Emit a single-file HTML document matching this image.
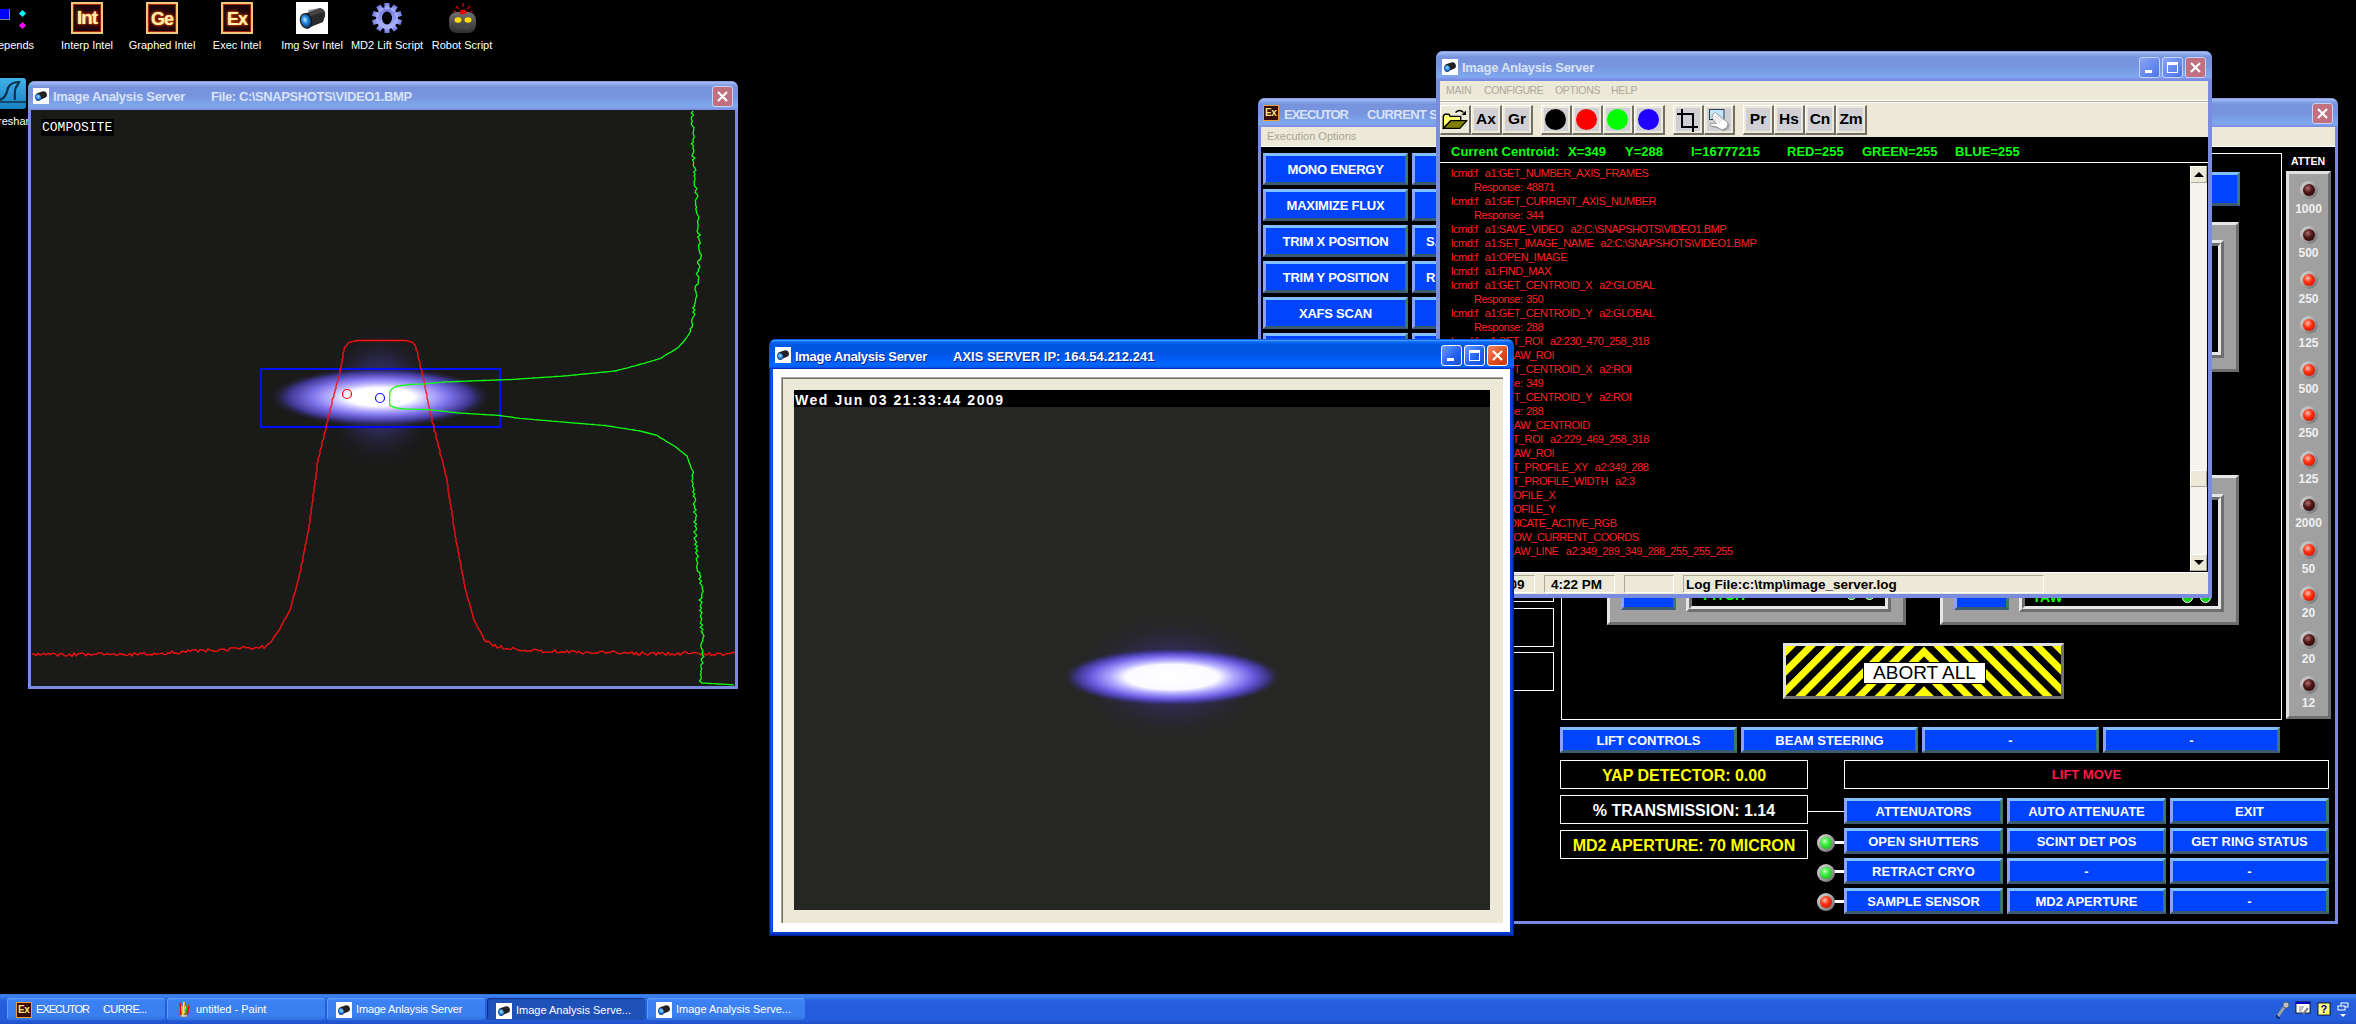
<!DOCTYPE html>
<html><head><meta charset="utf-8">
<style>
*{margin:0;padding:0;box-sizing:border-box}
html,body{width:2356px;height:1024px;overflow:hidden;background:#000;font-family:"Liberation Sans",sans-serif;position:relative}
.a{position:absolute}
.ico-lbl{position:absolute;top:39px;color:#fff;font-size:11px;white-space:nowrap;text-align:center;width:80px;line-height:13px}
/* XP inactive window */
.win{position:absolute}
.frame-in{background:#7A8CE0}
.tb-in{position:absolute;left:0;right:0;top:0;height:29px;border-radius:7px 7px 0 0;
 background:linear-gradient(to bottom,#7A90E0 0px,#A2BAF2 1.5px,#8AA8EA 3.5px,#7893DE 6px,#7794DE 15px,#7CA2E8 22px,#80A8EE 26px,#7F90E6 28px,#7A8CE0 29px)}
.tb-act{position:absolute;left:0;right:0;top:0;height:30px;border-radius:7px 7px 0 0;
 background:linear-gradient(to bottom,#0048D8 0px,#3D95FF 1.5px,#0A68F8 3px,#0056E0 6px,#0055E2 14px,#005CF5 20px,#0066FF 25px,#0060F8 28px,#0030C0 29.5px,#0030C0 30px)}
.ttl{position:absolute;font-weight:bold;font-size:13px;white-space:pre;line-height:16px}
.ttl-in{color:#D8E2F8}
.ttl-act{color:#fff;text-shadow:1px 1px 0 #0A1E8C}
.cam{position:absolute;width:16px;height:16px;background:#fff}
.cam:before{content:"";position:absolute;left:3px;top:4px;width:11px;height:7px;background:#222;border-radius:3px 5px 5px 3px;transform:rotate(-20deg)}
.cam:after{content:"";position:absolute;left:2px;top:6px;width:6px;height:7px;background:radial-gradient(circle at 60% 40%,#9fe0ff,#1a70d0 50%,#082050 90%);border-radius:50%;transform:rotate(-20deg)}
.xbtn-in{position:absolute;width:21px;height:21px;border-radius:3px;border:1px solid #C7D3F5;background:#C0707E}
.bbtn-in{position:absolute;width:21px;height:21px;border-radius:3px;border:1px solid #C7D3F5;background:linear-gradient(135deg,#8AA4F4,#4A74E8)}
.xbtn-act{position:absolute;width:21px;height:21px;border-radius:3px;border:1px solid #fff;background:linear-gradient(135deg,#F08868,#E04818 60%,#C83808)}
.bbtn-act{position:absolute;width:21px;height:21px;border-radius:3px;border:1px solid #fff;background:linear-gradient(135deg,#6A9CFF,#2060F0 60%,#1850D8)}
/* executor blue button */
.eb{position:absolute;background:#0044FF;border-style:solid;border-width:3px;border-color:#80C0FF #3C7870 #3C5A70 #8CA0FF;color:#fff;font-weight:bold;font-size:13px;text-align:center;white-space:nowrap;overflow:hidden}
.wbox{position:absolute;border:1px solid #fff}
.led{position:absolute;width:18px;height:18px;border-radius:50%;background:linear-gradient(135deg,#e0e0e0 0,#a8a8a8 45%,#6a6a6a 100%)}
.led:after{content:"";position:absolute;left:3px;top:3px;width:12px;height:12px;border-radius:50%}
.lg:after{background:radial-gradient(circle at 40% 35%,#c0ffc0 0,#40f040 35%,#10a010 100%)}
.lr:after{background:radial-gradient(circle at 40% 35%,#ffc0b0 0,#ff3010 40%,#c00800 100%)}
.ld:after{background:radial-gradient(circle at 40% 35%,#b07070 0,#501818 40%,#200000 100%)}
.tbb{position:absolute;top:998px;width:158px;height:22px;border-radius:3px;background:linear-gradient(to bottom,#4A90F8 0,#3C81F3 3px,#3A7EF0 18px,#3270E0 22px);box-shadow:inset 1px 1px 0 #5EA0FF}
.tbb span{position:absolute;top:4px;color:#fff;font:11px/14px 'Liberation Sans';white-space:pre}
.tbb-act{background:#1E52B7;box-shadow:inset 1px 1px 1px #0A3090}
.lg-l{color:#ff2020;font:11px/14px "Liberation Sans";white-space:pre;letter-spacing:-0.45px;word-spacing:1px}
.atl{position:absolute;width:45px;text-align:center;color:#f0f0f0;font:bold 12px/14px 'Liberation Sans'}
</style></head>
<body>

<!-- ===== DESKTOP ICONS ===== -->
<div id="desk">
 <div class="a" style="left:0;top:9px;width:10px;height:11px;background:#0000ff;border-right:1px solid #808080;border-bottom:1px solid #808080"></div>
 <div class="a" style="left:20px;top:11px;width:5px;height:5px;background:#00ffff;transform:rotate(45deg)"></div>
 <div class="a" style="left:20px;top:23px;width:5px;height:5px;background:#ff00ff;transform:rotate(45deg)"></div>
 <div class="ico-lbl" style="left:-28px">Depends</div>
 <div class="a" style="left:71px;top:2px;width:32px;height:32px;background:#1c060a;border:2px solid #f0c878;box-shadow:inset 0 0 0 1px #a02808"><div class="a" style="left:-2px;top:3px;width:32px;text-align:center;font:bold 19px/22px 'Liberation Sans';color:#fff0b0;text-shadow:0 0 1px #ff9020,0 0 3px #ff5000,0 0 5px #b02000;letter-spacing:-1px">Int</div></div>
 <div class="ico-lbl" style="left:47px">Interp Intel</div>
 <div class="a" style="left:146px;top:2px;width:32px;height:32px;background:#1c060a;border:2px solid #f0c878;box-shadow:inset 0 0 0 1px #a02808"><div class="a" style="left:-2px;top:4px;width:32px;text-align:center;font:bold 18px/22px 'Liberation Sans';color:#fff0b0;text-shadow:0 0 1px #ff9020,0 0 3px #ff5000,0 0 5px #b02000;letter-spacing:-1px">Ge</div></div>
 <div class="ico-lbl" style="left:122px">Graphed Intel</div>
 <div class="a" style="left:221px;top:2px;width:32px;height:32px;background:#1c060a;border:2px solid #f0c878;box-shadow:inset 0 0 0 1px #a02808"><div class="a" style="left:-2px;top:4px;width:32px;text-align:center;font:bold 18px/22px 'Liberation Sans';color:#fff0b0;text-shadow:0 0 1px #ff9020,0 0 3px #ff5000,0 0 5px #b02000;letter-spacing:-1px">Ex</div></div>
 <div class="ico-lbl" style="left:197px">Exec Intel</div>
 <div class="a" style="left:296px;top:2px;width:32px;height:32px;background:#fff">
  <svg class="a" style="left:0;top:0" width="32" height="32"><defs><radialGradient id="lens" cx="0.45" cy="0.4" r="0.6"><stop offset="0" stop-color="#c0f0ff"/><stop offset="0.4" stop-color="#2a90e8"/><stop offset="1" stop-color="#0a2050"/></radialGradient></defs>
  <path d="M8 12 L24 6 Q30 7 29 14 L27 20 L12 26 Z" fill="#2a2a2a"/><path d="M12 8 L24 6 Q28 7 28 10 L14 14z" fill="#555" opacity="0.6"/><ellipse cx="10" cy="19" rx="5.5" ry="7.5" transform="rotate(-20 10 19)" fill="url(#lens)" stroke="#111" stroke-width="1"/></svg></div>
 <div class="ico-lbl" style="left:272px">Img Svr Intel</div>
 <svg class="a" style="left:371px;top:2px" width="32" height="32"><defs><linearGradient id="gear" x1="0" y1="0" x2="0" y2="1"><stop offset="0" stop-color="#7078e0"/><stop offset="1" stop-color="#b0b8ff"/></linearGradient></defs>
  <g transform="translate(16 16)" fill="url(#gear)"><circle r="11"/>
  <rect x="-2.5" y="-15" width="5" height="6"/><rect x="-2.5" y="-15" width="5" height="6" transform="rotate(36)"/><rect x="-2.5" y="-15" width="5" height="6" transform="rotate(72)"/><rect x="-2.5" y="-15" width="5" height="6" transform="rotate(108)"/><rect x="-2.5" y="-15" width="5" height="6" transform="rotate(144)"/><rect x="-2.5" y="-15" width="5" height="6" transform="rotate(180)"/><rect x="-2.5" y="-15" width="5" height="6" transform="rotate(216)"/><rect x="-2.5" y="-15" width="5" height="6" transform="rotate(252)"/><rect x="-2.5" y="-15" width="5" height="6" transform="rotate(288)"/><rect x="-2.5" y="-15" width="5" height="6" transform="rotate(324)"/>
  <ellipse rx="5" ry="6.5" fill="#000"/></g></svg>
 <div class="ico-lbl" style="left:347px">MD2 Lift Script</div>
 <svg class="a" style="left:446px;top:1px" width="34" height="34"><defs><linearGradient id="rb" x1="0" y1="0" x2="0" y2="1"><stop offset="0" stop-color="#707070"/><stop offset="1" stop-color="#2e2e2e"/></linearGradient></defs>
  <rect x="3" y="11" width="27" height="21" rx="8" fill="url(#rb)"/><ellipse cx="12" cy="19" rx="3.5" ry="2.8" fill="#ffe000"/><ellipse cx="22" cy="19" rx="3.5" ry="2.8" fill="#ffe000"/>
  <path d="M10 25h14M11 27h12" stroke="#555" stroke-width="1"/><path d="M13 23v6M17 23v6M21 23v6" stroke="#444" stroke-width="1"/>
  <ellipse cx="17" cy="11" rx="3.5" ry="2.5" fill="#e00000"/><path d="M17 2v4M10 5l3 3M24 5l-3 3M7 10l3 1M27 10l-3 1" stroke="#e00000" stroke-width="1.2"/></svg>
 <div class="ico-lbl" style="left:422px">Robot Script</div>
 <div class="a" style="left:-6px;top:78px;width:32px;height:31px;border-radius:3px;background:linear-gradient(to bottom,#40b0e8,#1880c0)"><svg class="a" style="left:0;top:0" width="32" height="31"><path d="M6 22 Q12 20 14 10 Q17 4 25 4 L23 8 Q20 10 21 22" fill="none" stroke="#003050" stroke-width="2.2"/><path d="M0 24h32" stroke="#0a3050" stroke-width="1.5"/></svg></div>
 <div class="ico-lbl" style="left:-30px;top:115px">Wireshark</div>
</div>

<!-- ===== LEFT IAS WINDOW ===== -->
<div id="w1" class="win frame-in" style="left:28px;top:81px;width:710px;height:608px;border-radius:7px 7px 0 0">
 <div class="tb-in"></div>
 <div class="cam" style="left:5px;top:7px"></div>
 <div class="ttl ttl-in" style="left:25px;top:8px;letter-spacing:-0.3px">Image Analysis Server</div>
 <div class="ttl ttl-in" style="left:183px;top:8px;letter-spacing:-0.4px">File: C:\SNAPSHOTS\VIDEO1.BMP</div>
 <div class="xbtn-in" style="left:684px;top:5px"><svg width="19" height="19" class="a" style="left:0;top:0"><path d="M5 5L14 14M14 5L5 14" stroke="#fff" stroke-width="2.2"/></svg></div>
 <svg class="a" style="left:3px;top:29px" width="704" height="576" viewBox="31 110 704 576">
  <defs>
   <radialGradient id="g1" cx="380" cy="397" r="112" gradientUnits="userSpaceOnUse" gradientTransform="translate(380 397) scale(1 0.27) translate(-380 -397)">
    <stop offset="0" stop-color="#fff"/><stop offset="0.3" stop-color="#fff"/><stop offset="0.45" stop-color="#b8b0ff"/><stop offset="0.62" stop-color="#7a70e8"/><stop offset="0.82" stop-color="#3e3690"/><stop offset="1" stop-color="#1a1a19" stop-opacity="0"/>
   </radialGradient>
   <radialGradient id="g1b" cx="380" cy="397" r="70" gradientUnits="userSpaceOnUse" gradientTransform="translate(380 397) scale(0.85 1) translate(-380 -397)">
    <stop offset="0" stop-color="#40387a"/><stop offset="0.5" stop-color="#2c2850"/><stop offset="1" stop-color="#1a1a19" stop-opacity="0"/>
   </radialGradient>
  </defs>
  <rect x="31" y="110" width="704" height="576" fill="#1a1a19"/>
  <ellipse cx="380" cy="397" rx="60" ry="70" fill="url(#g1b)"/>
  <ellipse cx="380" cy="397" rx="112" ry="31" fill="url(#g1)"/>
  <rect x="261" y="369" width="239" height="58" fill="none" stroke="#0010ff" stroke-width="2"/>
  <circle cx="347" cy="394" r="4.5" fill="none" stroke="#ff0000" stroke-width="1.2"/>
  <circle cx="380" cy="398" r="4.5" fill="none" stroke="#1010ff" stroke-width="1.2"/>
  <polyline fill="none" stroke="#ff1010" stroke-width="1.3" points="32,654.4 34,653.7 36,655.5 38,653.4 40,655.1 42,654.4 44,653.3 46,654.9 48,653.2 50,654.6 52,653.3 54,653.3 56,654.5 58,656.0 60,653.4 62,653.7 64,655.2 66,656.3 68,655.0 70,654.3 72,656.4 74,653.0 76,655.9 78,653.9 80,653.3 82,653.2 84,653.9 86,655.7 88,653.4 90,654.8 92,655.0 94,654.0 96,654.6 98,652.9 100,652.8 102,653.3 104,655.0 106,654.1 108,653.7 110,654.6 112,654.2 114,653.6 116,655.3 118,655.0 120,653.3 122,654.5 124,654.3 126,655.6 128,655.0 130,653.4 132,655.9 134,652.8 136,653.8 138,655.0 140,652.8 142,654.0 144,652.4 146,654.6 148,655.0 150,654.3 152,655.2 154,653.1 156,654.3 158,653.8 160,653.7 162,653.1 164,654.4 166,654.6 168,652.8 170,653.4 172,651.1 174,653.3 176,652.9 178,654.1 180,653.3 182,651.3 184,651.5 186,652.4 188,649.9 190,651.4 192,650.2 194,649.9 196,649.6 198,652.0 200,649.6 202,649.9 204,650.3 206,651.9 208,648.9 210,650.1 212,650.4 214,651.5 216,651.1 218,651.1 220,648.9 222,649.3 224,648.9 226,650.7 228,650.9 230,647.8 232,647.8 234,647.9 236,647.8 238,648.5 240,648.8 242,647.5 244,646.4 246,647.8 248,647.5 250,648.1 252,649.4 254,648.3 256,647.5 258,647.8 260,647.9 262,645.5 264,648.4 266,646.0 268,644.3 271,642.1 273,638.9 274,636.9 276,634.5 277,633.2 279,630.5 280,628.5 281,626.5 282,624.4 283,622.5 284,620.0 286,617.8 287,615.9 288,613.7 289,611.9 290,609.4 291,608.4 291,606.1 292,603.6 292,601.7 293,599.8 293,597.8 294,595.5 294,594.4 295,592.6 296,590.0 296,588.0 297,585.5 297,583.5 298,581.8 298,579.7 299,578.4 299,575.6 300,573.3 300,572.4 301,569.9 301,567.4 301,565.8 302,563.2 302,561.7 303,560.2 303,558.0 303,555.8 304,553.2 304,551.3 305,549.0 305,547.7 305,545.4 306,543.7 306,541.1 307,538.9 307,537.6 307,535.7 308,533.5 308,531.4 309,529.4 309,527.3 309,524.6 310,523.0 310,520.7 310,518.3 310,516.3 311,514.6 311,512.5 311,511.0 311,509.3 312,506.6 312,505.2 312,503.2 313,501.2 313,498.4 313,496.2 313,494.2 314,492.1 314,490.1 314,488.6 314,486.9 315,484.8 315,482.3 315,480.5 316,478.6 316,475.7 316,474.4 316,472.7 317,470.5 317,468.4 317,466.1 317,463.7 318,462.4 318,459.8 318,458.3 319,456.5 320,453.7 320,451.7 320,450.3 321,448.0 322,445.3 322,443.2 322,441.1 323,440.0 324,437.8 324,435.0 324,433.7 325,431.9 326,429.4 326,427.0 326,425.2 327,422.7 328,420.5 328,419.6 328,417.1 329,414.9 330,413.3 330,410.6 330,409.0 331,406.9 332,404.1 332,402.0 332,400.0 333,397.9 334,396.2 334,393.7 335,391.9 335,389.6 336,388.5 336,385.8 337,383.9 337,382.1 338,380.5 338,377.9 339,376.5 340,374.0 340,372.0 340,370.0 341,367.4 341,365.8 342,363.4 342,361.1 342,359.9 343,357.1 343,355.3 343,353.5 344,351.2 344,348.8 345,347.0 347,345.1 348,343.3 350,341.9 353,341.7 355,341.0 358,340.5 360,340.5 362,340.5 364,340.5 366,340.5 368,340.5 370,340.5 372,340.5 374,340.5 376,340.5 378,340.5 380,340.5 382,340.5 384,340.5 386,340.5 388,340.5 390,340.5 392,340.5 394,340.5 396,340.5 398,340.5 400,340.5 402,340.5 404,340.5 406,340.5 408,341.2 411,341.7 413,343.0 415,345.2 416,347.3 416,349.5 417,350.6 418,353.5 418,355.6 418,357.2 419,360.3 420,362.6 420,363.9 420,367.0 421,368.6 422,370.9 422,373.7 423,375.6 423,377.0 424,379.5 424,381.8 425,383.8 425,385.8 425,388.1 426,390.7 426,392.0 427,394.7 427,396.7 427,398.4 428,400.9 428,403.4 429,405.4 429,407.0 430,410.1 430,411.9 430,414.2 431,415.2 432,417.5 432,419.2 432,422.2 433,423.6 434,425.5 434,427.9 434,430.5 435,432.4 436,433.7 436,435.6 436,438.5 437,440.1 438,442.2 438,443.5 438,445.5 439,448.2 440,449.9 440,451.5 440,454.5 441,456.2 442,458.4 442,459.5 443,462.6 443,463.8 444,466.9 444,468.5 445,470.5 445,472.9 446,475.5 446,476.8 447,478.6 447,481.1 447,482.8 448,484.7 448,486.8 448,488.7 448,490.9 449,493.1 449,495.1 449,497.7 450,499.2 450,501.4 450,503.1 451,505.3 451,507.0 451,509.3 452,511.0 452,513.9 452,515.8 453,517.4 453,519.7 453,522.3 453,523.4 454,526.2 454,527.8 454,529.9 455,532.4 455,533.9 455,536.0 456,538.2 456,540.6 456,541.8 457,544.4 457,546.2 458,548.2 458,549.9 458,551.8 459,553.5 459,555.6 459,557.5 460,560.3 460,561.7 461,563.6 461,565.5 461,568.4 462,570.4 462,572.2 462,573.7 463,575.7 463,577.8 464,580.0 464,581.6 464,583.9 465,585.7 465,588.6 466,590.6 466,592.1 467,593.7 467,596.6 468,597.8 468,599.8 469,601.4 470,603.9 470,606.0 471,608.0 471,609.6 472,612.0 472,613.4 473,615.7 473,617.5 474,619.9 475,621.6 476,623.6 477,626.1 478,628.1 480,630.7 481,632.7 482,635.1 483,637.1 484,639.3 486,641.7 488,641.3 490,642.4 493,646.1 495,644.4 497,647.8 499,647.7 501,645.8 503,648.8 505,649.2 507,648.5 509,649.1 511,649.6 513,647.3 515,648.9 517,649.1 519,650.5 521,650.6 523,650.8 525,650.2 527,651.5 529,650.9 531,651.2 533,649.7 535,649.2 537,649.8 539,650.8 541,650.1 543,652.7 545,651.8 547,652.1 549,652.1 551,652.3 553,651.7 555,650.0 557,652.9 559,652.7 561,651.9 563,652.0 565,652.5 567,650.4 569,652.9 571,651.2 573,650.6 575,651.3 577,653.0 579,651.1 581,653.1 583,654.0 585,652.3 587,651.9 589,652.3 591,653.1 593,653.4 596,652.9 598,653.1 600,651.1 602,651.3 604,651.8 606,653.6 608,652.0 610,653.0 612,651.0 614,651.3 616,652.0 618,653.5 620,653.6 622,653.6 624,652.3 626,653.1 628,653.0 630,653.0 632,651.8 634,654.6 636,652.2 638,655.0 640,654.9 642,651.6 644,653.2 646,654.6 648,655.1 650,653.3 652,652.7 654,652.5 656,655.1 658,652.5 660,653.9 662,652.3 664,653.7 666,655.2 668,652.3 670,654.8 672,653.7 674,655.0 676,654.4 678,652.7 680,655.1 682,653.6 684,652.0 686,651.9 688,653.7 690,653.6 692,653.0 695,652.5 697,653.2 699,653.1 701,655.0 703,652.0 705,654.7 707,655.1 709,652.5 711,655.4 713,654.6 715,655.3 717,653.1 719,653.4 721,653.5 723,655.7 725,654.3 727,653.5 729,653.7 731,653.2 733,652.4 735,652.6"/>
  <polyline fill="none" stroke="#10ff10" stroke-width="1.3" points="693.1,111.0 691.4,113.1 693.5,115.1 691.4,117.2 691.5,119.2 692.3,121.3 691.3,123.3 692.0,125.4 693.9,127.4 693.7,129.5 693.5,131.5 693.0,133.6 694.0,135.6 694.1,137.7 692.9,139.7 693.5,141.8 691.4,143.8 693.6,145.9 692.8,147.9 693.8,150.0 693.6,152.0 692.6,154.0 692.0,156.0 694.9,158.0 692.5,160.0 693.7,162.0 693.4,164.0 693.4,166.0 695.0,168.0 695.9,170.0 693.7,172.0 695.1,174.0 694.1,176.0 695.1,178.0 694.7,180.0 694.1,182.1 694.2,184.2 694.5,186.2 696.9,188.3 695.8,190.4 695.0,192.5 697.4,194.5 697.8,196.6 696.2,198.7 695.4,200.8 695.7,202.8 695.5,204.9 696.5,207.0 695.8,209.0 696.4,211.0 696.6,213.0 697.7,215.0 698.9,217.0 698.5,219.0 697.6,221.0 697.7,223.0 698.2,225.0 697.9,227.0 697.9,229.0 697.1,231.0 697.9,233.0 700.2,235.0 697.7,237.0 699.0,239.0 699.5,241.0 700.4,243.0 698.5,245.0 698.8,247.0 698.8,249.0 699.4,251.0 699.7,253.0 701.5,255.0 700.9,257.0 700.7,259.1 697.8,261.1 697.6,263.2 699.5,265.2 699.9,267.3 698.3,269.3 698.5,271.4 696.4,273.4 697.4,275.5 698.9,277.5 698.3,279.5 698.2,281.6 698.3,283.6 695.8,285.7 695.1,287.7 695.0,289.8 696.0,291.8 696.3,293.9 696.9,295.9 695.9,298.0 695.5,300.0 695.6,302.0 694.5,304.0 694.6,306.0 692.7,308.0 694.9,310.0 692.9,312.0 694.9,314.0 693.9,316.0 692.6,318.0 691.8,320.0 691.8,322.2 692.6,324.4 692.4,326.6 690.2,328.8 690.7,331.0 689.5,333.2 688.1,335.5 686.4,337.8 684.8,340.0 683.1,342.3 680.6,344.7 678.8,347.0 676.9,348.3 675.1,349.6 672.8,350.9 670.9,352.2 668.4,353.4 666.1,354.7 664.0,356.0 662.5,357.3 660.2,358.6 657.8,359.2 655.6,359.8 654.0,360.4 652.1,361.0 649.9,361.6 647.8,362.1 646.1,362.7 644.3,363.3 641.8,363.9 639.6,364.5 637.8,365.0 635.8,365.6 633.9,366.1 631.4,366.7 629.8,367.2 627.7,367.8 625.4,368.3 623.1,368.8 621.6,369.4 619.0,369.9 617.3,370.5 614.8,371.0 612.7,371.2 611.1,371.4 608.7,371.6 607.2,371.8 604.8,372.0 602.5,372.2 600.5,372.4 598.6,372.6 596.8,372.8 595.0,373.0 592.3,373.2 590.4,373.4 588.3,373.6 586.8,373.8 584.1,374.0 582.0,374.2 580.0,374.4 578.2,374.6 576.6,374.8 574.5,375.0 572.3,375.2 570.5,375.4 568.4,375.6 565.9,375.8 563.7,376.0 562.3,376.1 560.1,376.3 557.5,376.4 556.0,376.5 553.7,376.7 551.7,376.8 549.6,377.0 547.4,377.1 545.2,377.2 543.4,377.4 541.4,377.5 539.9,377.6 537.2,377.8 535.8,377.9 533.2,378.0 531.2,378.2 529.6,378.3 527.5,378.4 525.2,378.6 522.8,378.7 521.1,378.9 519.0,379.0 517.4,379.1 514.8,379.3 512.9,379.4 511.3,379.5 508.6,379.6 506.8,379.6 505.1,379.7 503.1,379.8 500.5,379.9 498.4,379.9 496.4,380.0 495.1,380.1 492.5,380.2 490.9,380.2 489.0,380.3 486.5,380.4 484.4,380.5 482.9,380.5 480.6,380.6 478.3,380.7 476.6,380.8 474.3,380.9 472.2,380.9 470.0,381.0 468.6,381.1 466.7,381.2 464.4,381.2 462.6,381.3 459.9,381.4 458.0,381.5 456.2,381.5 454.5,381.6 452.5,381.7 450.0,381.8 447.9,381.8 446.0,381.9 444.0,382.0 442.2,382.2 439.5,382.4 437.9,382.6 435.8,382.8 433.8,383.0 431.6,383.2 429.4,383.4 427.1,383.6 425.0,383.8 422.9,384.0 421.1,384.1 418.3,384.2 416.3,384.2 414.5,384.3 412.0,384.4 409.7,384.5 407.5,384.8 405.7,385.0 403.4,385.2 401.7,385.5 399.5,385.8 397.4,386.0 394.3,387.5 391.7,389.0 390.5,391.0 389.7,393.0 389.9,395.1 389.7,397.2 389.5,399.2 389.6,401.3 389.8,403.4 389.8,405.5 392.0,406.3 394.2,407.2 396.1,408.0 397.9,408.2 400.8,408.5 402.6,408.8 405.1,409.0 406.9,409.1 409.2,409.1 410.8,409.1 412.8,409.2 414.8,409.2 416.7,409.3 419.3,409.4 421.1,409.4 422.9,409.5 424.9,409.5 427.4,409.6 429.0,409.6 430.8,409.8 433.2,410.1 435.1,410.3 437.4,410.5 438.7,410.7 441.0,411.0 443.3,411.2 445.3,411.4 447.3,411.6 448.6,411.9 450.8,412.1 452.7,412.3 454.8,412.5 457.4,412.8 459.1,413.0 461.4,413.1 463.0,413.2 465.4,413.4 467.2,413.5 469.1,413.6 471.5,413.8 473.7,413.9 475.1,414.0 477.5,414.1 479.6,414.2 481.3,414.4 483.5,414.5 485.4,414.6 487.5,414.8 489.6,414.9 491.9,415.0 494.0,415.1 495.7,415.2 497.6,415.4 499.9,415.5 502.1,415.8 503.7,416.1 505.8,416.4 507.8,416.7 510.2,416.9 512.0,417.2 513.7,417.5 515.7,417.8 517.9,418.1 520.0,418.4 522.1,418.6 523.7,418.7 525.8,418.9 528.3,419.1 530.0,419.2 532.0,419.4 534.0,419.6 536.6,419.8 538.1,419.9 540.3,420.1 542.1,420.3 544.2,420.4 546.6,420.6 548.7,420.8 550.2,420.9 552.1,421.1 554.6,421.3 556.2,421.4 558.1,421.6 560.8,421.8 562.4,421.9 564.8,422.1 566.5,422.3 568.9,422.5 570.6,422.6 572.3,422.8 574.3,423.0 576.7,423.1 578.8,423.3 581.0,423.5 582.4,423.6 584.9,423.8 586.7,424.0 588.8,424.1 590.6,424.3 592.7,424.5 594.9,424.7 597.2,424.8 598.6,425.0 600.9,425.2 603.2,425.3 605.4,425.5 606.8,425.8 608.8,426.1 611.5,426.5 613.6,426.8 615.3,427.1 617.0,427.4 619.8,427.8 621.4,428.1 623.9,428.4 625.7,428.7 627.9,429.1 629.4,429.4 632.0,429.7 633.6,430.0 635.8,430.4 638.2,430.7 640.3,431.0 641.7,431.5 643.8,432.0 645.9,432.5 648.0,433.0 649.9,433.5 651.7,434.0 653.8,434.5 656.2,435.0 658.4,436.3 659.9,437.6 662.4,438.8 664.7,440.1 666.2,441.4 668.9,442.7 670.5,443.9 673.0,445.2 675.0,446.5 677.1,448.1 678.8,449.7 680.9,451.2 683.1,452.8 684.9,454.4 687.1,456.0 687.7,458.0 688.4,460.0 688.8,462.0 689.9,464.0 690.6,466.0 691.1,468.0 692.2,470.0 693.6,472.0 692.7,474.0 692.0,476.0 693.0,478.0 692.0,480.0 692.2,482.0 693.3,484.0 692.4,486.0 693.7,488.0 694.0,490.0 692.7,492.0 694.7,494.0 693.1,496.0 695.3,498.0 695.6,500.0 694.8,502.0 693.3,504.0 694.8,506.0 694.4,508.0 696.2,510.0 693.6,512.0 696.0,514.0 696.4,516.0 695.6,518.0 695.9,520.0 693.9,522.0 696.5,524.0 694.9,526.0 696.4,528.0 696.3,530.0 693.9,532.0 695.9,534.0 696.6,536.1 694.0,538.1 695.1,540.2 696.6,542.2 694.9,544.3 697.4,546.3 695.6,548.4 697.5,550.4 695.6,552.5 696.9,554.5 698.4,556.6 696.3,558.6 696.7,560.7 697.7,562.7 697.3,564.8 696.5,566.8 697.2,568.9 697.3,570.9 700.0,573.0 699.7,575.0 700.8,577.0 699.0,579.0 701.5,581.0 699.8,583.0 701.6,585.0 702.4,587.0 702.1,589.0 703.3,591.2 701.9,593.4 701.6,595.6 702.1,597.8 699.2,600.0 702.1,602.1 700.9,604.2 700.2,606.2 701.5,608.3 699.7,610.4 702.1,612.5 700.9,614.6 700.4,616.8 701.9,618.9 701.0,621.0 700.4,623.2 702.4,625.3 700.3,627.5 703.0,629.6 701.3,631.7 702.8,633.9 704.0,636.0 702.8,638.1 703.0,640.1 701.9,642.2 700.9,644.3 701.0,646.3 701.4,648.4 702.9,650.5 702.3,652.5 702.5,654.6 703.8,656.7 701.3,658.7 701.6,660.8 703.0,662.9 701.0,664.9 700.9,667.0 701.8,669.0 700.7,671.0 701.2,673.0 700.5,675.0 701.3,677.0 701.1,679.0 699.6,681.0 702.0,683.0 704.1,683.1 706.2,683.2 708.3,683.4 710.5,683.5 712.6,683.6 714.7,683.7 716.8,683.8 718.9,684.0 721.0,684.1 723.1,684.2 725.2,684.3 727.4,684.4 729.5,684.6 731.6,684.7 733.7,684.8"/>
  <rect x="41" y="119" width="73" height="17" fill="#000"/>
 </svg>
 <div class="a" style="left:14px;top:40px;color:#fff;font-family:'Liberation Mono',monospace;font-size:13px;line-height:14px;white-space:pre">COMPOSITE</div>
</div>

<!-- ===== EXECUTOR ===== -->
<div id="exe">
 <div class="a frame-in" style="left:1258px;top:98px;width:1080px;height:826px;border-radius:7px 7px 0 0"></div>
 <div class="tb-in" style="left:1258px;top:98px;width:1080px"></div>
 <div class="a" style="left:1263px;top:105px;width:16px;height:16px;background:#3a0808;border:1px solid #f0a030"><div class="a" style="left:1px;top:0px;font:bold 10px/14px 'Liberation Sans';color:#ffe080;letter-spacing:-0.5px">Ex</div></div>
 <div class="ttl ttl-in" style="left:1284px;top:107px;letter-spacing:-1px">EXECUTOR</div><div class="ttl ttl-in" style="left:1367px;top:107px;letter-spacing:-0.6px">CURRENT STATUS</div>
 <div class="xbtn-in" style="left:2312px;top:103px"><svg width="19" height="19" class="a" style="left:0;top:0"><path d="M5 5L14 14M14 5L5 14" stroke="#fff" stroke-width="2.2"/></svg></div>
 <div class="a" style="left:1261px;top:127px;width:1074px;height:19px;background:#ECE9D8"></div>
 <div class="a" style="left:1267px;top:129px;font-size:11px;line-height:14px;color:#A8A593;white-space:pre">Execution Options</div>
 <div class="a" style="left:1261px;top:146px;width:1074px;height:1px;background:#fff"></div>
 <div class="a" style="left:1261px;top:147px;width:1074px;height:774px;background:#000"></div>
 <!-- left column buttons -->
 <div class="eb" style="left:1263px;top:153px;width:145px;height:32px;line-height:28px;letter-spacing:-0.25px">MONO ENERGY</div>
 <div class="eb" style="left:1263px;top:189px;width:145px;height:32px;line-height:28px;letter-spacing:-0.25px">MAXIMIZE FLUX</div>
 <div class="eb" style="left:1263px;top:225px;width:145px;height:32px;line-height:28px;letter-spacing:-0.25px">TRIM X POSITION</div>
 <div class="eb" style="left:1263px;top:261px;width:145px;height:32px;line-height:28px;letter-spacing:-0.25px">TRIM Y POSITION</div>
 <div class="eb" style="left:1263px;top:297px;width:145px;height:32px;line-height:28px;letter-spacing:-0.25px">XAFS SCAN</div>
 <div class="eb" style="left:1263px;top:333px;width:145px;height:32px;line-height:28px;letter-spacing:-0.25px"></div>
 <div class="eb" style="left:1412px;top:153px;width:145px;height:32px;line-height:28px;letter-spacing:-0.25px"></div>
 <div class="eb" style="left:1412px;top:189px;width:145px;height:32px;line-height:28px;letter-spacing:-0.25px"></div>
 <div class="eb" style="left:1412px;top:225px;width:145px;height:32px;line-height:28px;text-align:left;text-indent:11px">SAVE SETTINGS</div>
 <div class="eb" style="left:1412px;top:261px;width:145px;height:32px;line-height:28px;text-align:left;text-indent:11px">RESTORE SETTINGS</div>
 <div class="eb" style="left:1412px;top:297px;width:145px;height:32px;line-height:28px;letter-spacing:-0.25px"></div>
 <div class="eb" style="left:1412px;top:333px;width:145px;height:32px;line-height:28px;letter-spacing:-0.25px"></div>
 <div class="wbox" style="left:1412px;top:560px;width:142px;height:42px"></div>
 <div class="wbox" style="left:1412px;top:608px;width:142px;height:39px"></div>
 <div class="wbox" style="left:1412px;top:652px;width:142px;height:39px"></div>
 <!-- big box -->
 <div class="wbox" style="left:1561px;top:153px;width:721px;height:567px"></div>
 <div class="eb" style="left:2100px;top:172px;width:140px;height:34px"></div>
 <!-- gray motor panels -->
 <div class="a" style="left:1607px;top:222px;width:299px;height:150px;background:#A0A0A0;border-style:solid;border-width:3px;border-color:#E6E6E6 #6E6E6E #6E6E6E #E6E6E6"></div>
 <div class="a" style="left:1940px;top:222px;width:299px;height:150px;background:#A0A0A0;border-style:solid;border-width:3px;border-color:#E6E6E6 #6E6E6E #6E6E6E #E6E6E6"></div>
 <div class="a" style="left:2019px;top:240px;width:205px;height:118px;background:#000;border-style:solid;border-width:3px;border-color:#E6E6E6 #6E6E6E #6E6E6E #E6E6E6"><div class="a" style="left:0;top:0;right:0;bottom:0;border-style:solid;border-width:3px;border-color:#6E6E6E #E6E6E6 #E6E6E6 #6E6E6E"></div></div>
 <div class="a" style="left:1607px;top:475px;width:299px;height:150px;background:#A0A0A0;border-style:solid;border-width:3px;border-color:#E6E6E6 #6E6E6E #6E6E6E #E6E6E6"></div>
 <div class="a" style="left:1940px;top:475px;width:299px;height:150px;background:#A0A0A0;border-style:solid;border-width:3px;border-color:#E6E6E6 #6E6E6E #6E6E6E #E6E6E6"></div>
 <div class="a" style="left:1686px;top:494px;width:205px;height:118px;background:#000;border-style:solid;border-width:3px;border-color:#E6E6E6 #6E6E6E #6E6E6E #E6E6E6"><div class="a" style="left:0;top:0;right:0;bottom:0;border-style:solid;border-width:3px;border-color:#6E6E6E #E6E6E6 #E6E6E6 #6E6E6E"></div><div class="a" style="left:14px;top:90px;color:#10ff10;font:bold 14px/16px 'Liberation Sans'">PITCH</div></div>
 <div class="a" style="left:2019px;top:494px;width:205px;height:118px;background:#000;border-style:solid;border-width:3px;border-color:#E6E6E6 #6E6E6E #6E6E6E #E6E6E6"><div class="a" style="left:0;top:0;right:0;bottom:0;border-style:solid;border-width:3px;border-color:#6E6E6E #E6E6E6 #E6E6E6 #6E6E6E"></div><div class="a" style="left:10px;top:92px;color:#10ff10;font:bold 14px/16px 'Liberation Sans'">YAW</div>
  <div class="a" style="left:160px;top:95px;width:11px;height:11px;border-radius:50%;background:#10d010;border:1px solid #fff"></div><div class="a" style="left:178px;top:95px;width:11px;height:11px;border-radius:50%;background:#10d010;border:1px solid #fff"></div></div>
 <div class="a" style="left:1686px;top:494px;width:205px;height:118px"><div class="a" style="left:160px;top:95px;width:11px;height:11px;border-radius:50%;background:#10d010;border:1px solid #fff"></div><div class="a" style="left:178px;top:95px;width:11px;height:11px;border-radius:50%;background:#10d010;border:1px solid #fff"></div></div>
 <div class="eb" style="left:1621px;top:575px;width:55px;height:35px"></div>
 <div class="eb" style="left:1954px;top:575px;width:55px;height:35px"></div>
 <!-- ATTEN -->
 <div class="a" style="left:2287px;top:155px;width:42px;text-align:center;color:#fff;font:bold 10.5px/12px 'Liberation Sans'">ATTEN</div>
 <div class="a" style="left:2286px;top:171px;width:45px;height:548px;background:#A0A0A0;border-style:solid;border-width:3px;border-color:#E0E0E0 #6E6E6E #6E6E6E #E0E0E0"></div>
 <div class="led ld" style="left:2300px;top:181px"></div><div class="atl" style="left:2286px;top:202px">1000</div>
 <div class="led ld" style="left:2300px;top:226px"></div><div class="atl" style="left:2286px;top:246px">500</div>
 <div class="led lr" style="left:2300px;top:271px"></div><div class="atl" style="left:2286px;top:292px">250</div>
 <div class="led lr" style="left:2300px;top:316px"></div><div class="atl" style="left:2286px;top:336px">125</div>
 <div class="led lr" style="left:2300px;top:361px"></div><div class="atl" style="left:2286px;top:382px">500</div>
 <div class="led lr" style="left:2300px;top:406px"></div><div class="atl" style="left:2286px;top:426px">250</div>
 <div class="led lr" style="left:2300px;top:451px"></div><div class="atl" style="left:2286px;top:472px">125</div>
 <div class="led ld" style="left:2300px;top:496px"></div><div class="atl" style="left:2286px;top:516px">2000</div>
 <div class="led lr" style="left:2300px;top:541px"></div><div class="atl" style="left:2286px;top:562px">50</div>
 <div class="led lr" style="left:2300px;top:586px"></div><div class="atl" style="left:2286px;top:606px">20</div>
 <div class="led ld" style="left:2300px;top:631px"></div><div class="atl" style="left:2286px;top:652px">20</div>
 <div class="led ld" style="left:2300px;top:676px"></div><div class="atl" style="left:2286px;top:696px">12</div>
 <!-- abort -->
 <div class="a" style="left:1783px;top:643px;width:281px;height:56px;border-style:solid;border-width:3px;border-color:#E0E0E0 #707070 #707070 #E0E0E0;overflow:hidden">
  <svg class="a" style="left:0;top:0" width="275" height="50"><defs>
   <pattern id="stL" width="14" height="14" patternUnits="userSpaceOnUse" patternTransform="rotate(45)"><rect width="7" height="14" fill="#ffff00"/></pattern>
   <pattern id="stR" width="14" height="14" patternUnits="userSpaceOnUse" patternTransform="rotate(-45)"><rect width="7" height="14" fill="#ffff00"/></pattern></defs>
   <rect width="275" height="50" fill="#000"/><rect width="138" height="50" fill="url(#stL)"/><rect width="138" height="50" fill="url(#stL)" transform="translate(276 0) scale(-1 1)"/></svg>
  <div class="a" style="left:77px;top:16px;width:123px;height:22px;background:#fff;border:1px solid #000;font:19px/20px 'Liberation Sans';color:#000;text-align:center">ABORT ALL</div>
 </div>
 <!-- bottom -->
 <div class="eb" style="left:1560px;top:727px;width:177px;height:26px;line-height:21px">LIFT CONTROLS</div>
 <div class="eb" style="left:1741px;top:727px;width:177px;height:26px;line-height:21px">BEAM STEERING</div>
 <div class="eb" style="left:1922px;top:727px;width:177px;height:26px;line-height:21px">-</div>
 <div class="eb" style="left:2103px;top:727px;width:177px;height:26px;line-height:21px">-</div>
 <div class="wbox" style="left:1560px;top:760px;width:248px;height:29px;color:#ffff00;font:bold 16px/29px 'Liberation Sans';text-align:center">YAP DETECTOR: 0.00</div>
 <div class="wbox" style="left:1560px;top:795px;width:248px;height:29px;color:#fff;font:bold 16px/29px 'Liberation Sans';text-align:center">% TRANSMISSION: 1.14</div>
 <div class="wbox" style="left:1560px;top:830px;width:248px;height:29px;color:#ffff00;font:bold 16px/29px 'Liberation Sans';text-align:center">MD2 APERTURE: 70 MICRON</div>
 <div class="wbox" style="left:1844px;top:760px;width:485px;height:29px;color:#ff1848;font:bold 13px/27px 'Liberation Sans';text-align:center">LIFT MOVE</div>
 <div class="a" style="left:1808px;top:811px;width:36px;height:1px;background:#fff"></div>
 <div class="eb" style="left:1844px;top:798px;width:159px;height:26px;line-height:21px">ATTENUATORS</div>
 <div class="eb" style="left:2007px;top:798px;width:159px;height:26px;line-height:21px">AUTO ATTENUATE</div>
 <div class="eb" style="left:2170px;top:798px;width:159px;height:26px;line-height:21px">EXIT</div>
 <div class="eb" style="left:1844px;top:828px;width:159px;height:26px;line-height:21px">OPEN SHUTTERS</div>
 <div class="eb" style="left:2007px;top:828px;width:159px;height:26px;line-height:21px">SCINT DET POS</div>
 <div class="eb" style="left:2170px;top:828px;width:159px;height:26px;line-height:21px">GET RING STATUS</div>
 <div class="eb" style="left:1844px;top:858px;width:159px;height:26px;line-height:21px">RETRACT CRYO</div>
 <div class="eb" style="left:2007px;top:858px;width:159px;height:26px;line-height:21px">-</div>
 <div class="eb" style="left:2170px;top:858px;width:159px;height:26px;line-height:21px">-</div>
 <div class="eb" style="left:1844px;top:888px;width:159px;height:26px;line-height:21px">SAMPLE SENSOR</div>
 <div class="eb" style="left:2007px;top:888px;width:159px;height:26px;line-height:21px">MD2 APERTURE</div>
 <div class="eb" style="left:2170px;top:888px;width:159px;height:26px;line-height:21px">-</div>
 <div class="a" style="left:1830px;top:841px;width:14px;height:3px;background:#fff"></div>
 <div class="a" style="left:1830px;top:870px;width:14px;height:3px;background:#fff"></div>
 <div class="a" style="left:1830px;top:900px;width:14px;height:3px;background:#fff"></div>
 <div class="led lg" style="left:1817px;top:834px"></div>
 <div class="led lg" style="left:1817px;top:864px"></div>
 <div class="led lr" style="left:1817px;top:893px"></div>
</div>

<!-- ===== IAS TOP RIGHT ===== -->
<div id="w3">
 <div class="a frame-in" style="left:1436px;top:51px;width:776px;height:547px;border-radius:7px 7px 0 0"></div>
 <div class="tb-in" style="left:1436px;top:51px;width:776px;height:30px"></div>
 <div class="cam" style="left:1442px;top:59px"></div>
 <div class="ttl ttl-in" style="left:1462px;top:60px;letter-spacing:-0.3px">Image Anlaysis Server</div>
 <div class="bbtn-in" style="left:2139px;top:57px"><div class="a" style="left:5px;top:12px;width:7px;height:3px;background:#fff"></div></div>
 <div class="bbtn-in" style="left:2162px;top:57px"><div class="a" style="left:4px;top:4px;width:11px;height:11px;border:1px solid #fff;border-top-width:3px"></div></div>
 <div class="xbtn-in" style="left:2185px;top:57px"><svg width="19" height="19" class="a" style="left:0;top:0"><path d="M5 5L14 14M14 5L5 14" stroke="#fff" stroke-width="2.2"/></svg></div>
 <div class="a" style="left:1440px;top:81px;width:768px;height:56px;background:#ECE9D8"></div>
 <div class="a" style="left:1440px;top:100px;width:768px;height:1px;background:#fff"></div>
 <div class="a" style="left:1440px;top:101px;width:768px;height:1px;background:#ACA899"></div>
 <div class="a" style="left:1440px;top:102px;width:768px;height:1px;background:#fff"></div>
 <div class="a" style="left:1446px;top:83px;font-size:10.5px;line-height:14px;color:#ACA899;white-space:pre;letter-spacing:-0.2px">MAIN</div>
 <div class="a" style="left:1484px;top:83px;font-size:10.5px;line-height:14px;color:#ACA899;white-space:pre;letter-spacing:-0.4px">CONFIGURE</div>
 <div class="a" style="left:1555px;top:83px;font-size:10.5px;line-height:14px;color:#ACA899;white-space:pre;letter-spacing:-0.3px">OPTIONS</div>
 <div class="a" style="left:1611px;top:83px;font-size:10.5px;line-height:14px;color:#ACA899;white-space:pre;letter-spacing:-0.3px">HELP</div>
 <div class="a" style="left:1440px;top:105px;width:31px;height:30px;border-style:solid;border-width:1px 2px 2px 1px;border-color:#fff #716F64 #716F64 #fff;background:#ECE9D8"><svg class="a" style="left:1px;top:3px" width="28" height="24"><path d="M1.3 19.4V7L2.7 5.3H7L8.2 7.4H18.7V11.6H9L1.3 19.4z" fill="#ffff70" stroke="#000" stroke-width="1.4" stroke-linejoin="round"/><path d="M9 11.6H24.8L17.8 19.4H1.3z" fill="#808000" stroke="#000" stroke-width="1.4" stroke-linejoin="round"/><path d="M13.5 3.5Q17.5 -0.5 21.5 3.5" fill="none" stroke="#000" stroke-width="1.2"/><path d="M24 1.5V6H19.5z" fill="#000"/></svg></div>
 <div class="a" style="left:1471px;top:105px;width:31px;height:30px;border-style:solid;border-width:1px 2px 2px 1px;border-color:#fff #716F64 #716F64 #fff;background:#ECE9D8"><div class="a" style="left:2px;top:2px;width:24px;height:23px;background:#D0D0D4"></div><div class="a" style="left:0;top:3px;width:28px;text-align:center;font:bold 15.5px/20px 'Liberation Sans';color:#000">Ax</div></div>
 <div class="a" style="left:1502px;top:105px;width:31px;height:30px;border-style:solid;border-width:1px 2px 2px 1px;border-color:#fff #716F64 #716F64 #fff;background:#ECE9D8"><div class="a" style="left:2px;top:2px;width:24px;height:23px;background:#D0D0D4"></div><div class="a" style="left:0;top:3px;width:28px;text-align:center;font:bold 15.5px/20px 'Liberation Sans';color:#000">Gr</div></div>
 <div class="a" style="left:1541px;top:105px;width:31px;height:30px;border-style:solid;border-width:1px 2px 2px 1px;border-color:#fff #716F64 #716F64 #fff;background:#ECE9D8"><div class="a" style="left:2px;top:2px;width:24px;height:23px;background:#D0D0D4"></div><div class="a" style="left:3px;top:3px;width:21px;height:21px;border-radius:50%;background:#000"></div></div>
 <div class="a" style="left:1572px;top:105px;width:31px;height:30px;border-style:solid;border-width:1px 2px 2px 1px;border-color:#fff #716F64 #716F64 #fff;background:#ECE9D8"><div class="a" style="left:2px;top:2px;width:24px;height:23px;background:#D0D0D4"></div><div class="a" style="left:3px;top:3px;width:21px;height:21px;border-radius:50%;background:#ff0000"></div></div>
 <div class="a" style="left:1603px;top:105px;width:31px;height:30px;border-style:solid;border-width:1px 2px 2px 1px;border-color:#fff #716F64 #716F64 #fff;background:#ECE9D8"><div class="a" style="left:2px;top:2px;width:24px;height:23px;background:#D0D0D4"></div><div class="a" style="left:3px;top:3px;width:21px;height:21px;border-radius:50%;background:#00ff00"></div></div>
 <div class="a" style="left:1634px;top:105px;width:31px;height:30px;border-style:solid;border-width:1px 2px 2px 1px;border-color:#fff #716F64 #716F64 #fff;background:#ECE9D8"><div class="a" style="left:2px;top:2px;width:24px;height:23px;background:#D0D0D4"></div><div class="a" style="left:3px;top:3px;width:21px;height:21px;border-radius:50%;background:#2000ff"></div></div>
 <div class="a" style="left:1673px;top:105px;width:31px;height:30px;border-style:solid;border-width:1px 2px 2px 1px;border-color:#fff #716F64 #716F64 #fff;background:#ECE9D8"><div class="a" style="left:2px;top:2px;width:24px;height:23px;background:#D0D0D4"></div><svg class="a" style="left:0;top:0" width="28" height="28"><path d="M8 3v18h16M3 8h16v18" fill="none" stroke="#000" stroke-width="2"/></svg></div>
 <div class="a" style="left:1704px;top:105px;width:31px;height:30px;border-style:solid;border-width:1px 2px 2px 1px;border-color:#fff #716F64 #716F64 #fff;background:#ECE9D8"><div class="a" style="left:2px;top:2px;width:24px;height:23px;background:#D0D0D4"></div><svg class="a" style="left:0;top:0" width="28" height="28"><rect x="4.5" y="3.5" width="14.5" height="10" fill="#c0e4fa" stroke="#304050" stroke-width="1"/><path d="M9 10L12 8L20.5 15L24.5 18.5L23.5 23L18.5 25.5L13.5 22.5L6.5 21L7 19L13 19L8.5 13.5Z" fill="#707070" opacity="0.45"/><path d="M7.5 8.5L10.5 6.5L19 13.5L23 17L22 21.5L17 24L12 21L5 19.5L5.5 17.5L11.5 17.5L7 12Z" fill="#fff" stroke="#8a8a8a" stroke-width="0.8"/><path d="M9 9.5L16.5 15.5M11 8.3L18 14.3M8 11L15 17" stroke="#d0b8b8" stroke-width="0.7"/></svg></div>
 <div class="a" style="left:1743px;top:105px;width:31px;height:30px;border-style:solid;border-width:1px 2px 2px 1px;border-color:#fff #716F64 #716F64 #fff;background:#ECE9D8"><div class="a" style="left:2px;top:2px;width:24px;height:23px;background:#D0D0D4"></div><div class="a" style="left:0;top:3px;width:28px;text-align:center;font:bold 15.5px/20px 'Liberation Sans';color:#000">Pr</div></div>
 <div class="a" style="left:1774px;top:105px;width:31px;height:30px;border-style:solid;border-width:1px 2px 2px 1px;border-color:#fff #716F64 #716F64 #fff;background:#ECE9D8"><div class="a" style="left:2px;top:2px;width:24px;height:23px;background:#D0D0D4"></div><div class="a" style="left:0;top:3px;width:28px;text-align:center;font:bold 15.5px/20px 'Liberation Sans';color:#000">Hs</div></div>
 <div class="a" style="left:1805px;top:105px;width:31px;height:30px;border-style:solid;border-width:1px 2px 2px 1px;border-color:#fff #716F64 #716F64 #fff;background:#ECE9D8"><div class="a" style="left:2px;top:2px;width:24px;height:23px;background:#D0D0D4"></div><div class="a" style="left:0;top:3px;width:28px;text-align:center;font:bold 15.5px/20px 'Liberation Sans';color:#000">Cn</div></div>
 <div class="a" style="left:1836px;top:105px;width:31px;height:30px;border-style:solid;border-width:1px 2px 2px 1px;border-color:#fff #716F64 #716F64 #fff;background:#ECE9D8"><div class="a" style="left:2px;top:2px;width:24px;height:23px;background:#D0D0D4"></div><div class="a" style="left:0;top:3px;width:28px;text-align:center;font:bold 15.5px/20px 'Liberation Sans';color:#000">Zm</div></div>
 <div class="a" style="left:1440px;top:137px;width:768px;height:435px;background:#000"></div>
 <div class="a" style="left:1451px;top:144px;color:#10ff10;font:bold 13px/16px 'Liberation Sans';white-space:pre">Current Centroid:</div>
 <div class="a" style="left:1568px;top:144px;color:#10ff10;font:bold 13px/16px 'Liberation Sans';white-space:pre">X=349</div>
 <div class="a" style="left:1625px;top:144px;color:#10ff10;font:bold 13px/16px 'Liberation Sans';white-space:pre">Y=288</div>
 <div class="a" style="left:1691px;top:144px;color:#10ff10;font:bold 13px/16px 'Liberation Sans';white-space:pre">I=16777215</div>
 <div class="a" style="left:1787px;top:144px;color:#10ff10;font:bold 13px/16px 'Liberation Sans';white-space:pre">RED=255</div>
 <div class="a" style="left:1862px;top:144px;color:#10ff10;font:bold 13px/16px 'Liberation Sans';white-space:pre">GREEN=255</div>
 <div class="a" style="left:1955px;top:144px;color:#10ff10;font:bold 13px/16px 'Liberation Sans';white-space:pre">BLUE=255</div>
 <div class="a" style="left:1440px;top:162px;width:768px;height:1px;background:#fff"></div>
 <div class="a lg-l" style="left:1451px;top:166px">lcmd:f  a1:GET_NUMBER_AXIS_FRAMES</div>
 <div class="a lg-l" style="left:1474px;top:180px">Response: 48871</div>
 <div class="a lg-l" style="left:1451px;top:194px">lcmd:f  a1:GET_CURRENT_AXIS_NUMBER</div>
 <div class="a lg-l" style="left:1474px;top:208px">Response: 344</div>
 <div class="a lg-l" style="left:1451px;top:222px">lcmd:f  a1:SAVE_VIDEO  a2:C:\SNAPSHOTS\VIDEO1.BMP</div>
 <div class="a lg-l" style="left:1451px;top:236px">lcmd:f  a1:SET_IMAGE_NAME  a2:C:\SNAPSHOTS\VIDEO1.BMP</div>
 <div class="a lg-l" style="left:1451px;top:250px">lcmd:f  a1:OPEN_IMAGE</div>
 <div class="a lg-l" style="left:1451px;top:264px">lcmd:f  a1:FIND_MAX</div>
 <div class="a lg-l" style="left:1451px;top:278px">lcmd:f  a1:GET_CENTROID_X  a2:GLOBAL</div>
 <div class="a lg-l" style="left:1474px;top:292px">Response: 350</div>
 <div class="a lg-l" style="left:1451px;top:306px">lcmd:f  a1:GET_CENTROID_Y  a2:GLOBAL</div>
 <div class="a lg-l" style="left:1474px;top:320px">Response: 288</div>
 <div class="a lg-l" style="left:1451px;top:334px">lcmd:f  a1:SET_ROI  a2:230_470_258_318</div>
 <div class="a lg-l" style="left:1451px;top:348px">lcmd:f  a1:DRAW_ROI</div>
 <div class="a lg-l" style="left:1451px;top:362px">lcmd:f  a1:GET_CENTROID_X  a2:ROI</div>
 <div class="a lg-l" style="left:1474px;top:376px">Response: 349</div>
 <div class="a lg-l" style="left:1451px;top:390px">lcmd:f  a1:GET_CENTROID_Y  a2:ROI</div>
 <div class="a lg-l" style="left:1474px;top:404px">Response: 288</div>
 <div class="a lg-l" style="left:1451px;top:418px">lcmd:f  a1:DRAW_CENTROID</div>
 <div class="a lg-l" style="left:1451px;top:432px">lcmd:f  a1:SET_ROI  a2:229_469_258_318</div>
 <div class="a lg-l" style="left:1451px;top:446px">lcmd:f  a1:DRAW_ROI</div>
 <div class="a lg-l" style="left:1451px;top:460px">lcmd:f  a1:SET_PROFILE_XY  a2:349_288</div>
 <div class="a lg-l" style="left:1451px;top:474px">lcmd:f  a1:SET_PROFILE_WIDTH  a2:3</div>
 <div class="a lg-l" style="left:1451px;top:488px">lcmd:f  a1:PROFILE_X</div>
 <div class="a lg-l" style="left:1451px;top:502px">lcmd:f  a1:PROFILE_Y</div>
 <div class="a lg-l" style="left:1451px;top:516px">lcmd:f  a1:INDICATE_ACTIVE_RGB</div>
 <div class="a lg-l" style="left:1451px;top:530px">lcmd:f  a1:SHOW_CURRENT_COORDS</div>
 <div class="a lg-l" style="left:1451px;top:544px">lcmd:f  a1:DRAW_LINE  a2:349_289_349_288_255_255_255</div>
 <!-- scrollbar -->
 <div class="a" style="left:2190px;top:166px;width:17px;height:405px;background:#F4F3EE"></div>
 <div class="a" style="left:2190px;top:166px;width:17px;height:17px;background:#ECE9D8;border-style:solid;border-width:1px;border-color:#fff #ACA899 #ACA899 #fff"><div class="a" style="left:3px;top:5px;width:0;height:0;border-left:5px solid transparent;border-right:5px solid transparent;border-bottom:5px solid #000"></div></div>
 <div class="a" style="left:2190px;top:470px;width:17px;height:17px;background:#ECE9D8;border-style:solid;border-width:1px;border-color:#fff #ACA899 #ACA899 #fff"></div>
 <div class="a" style="left:2190px;top:554px;width:17px;height:17px;background:#ECE9D8;border-style:solid;border-width:1px;border-color:#fff #ACA899 #ACA899 #fff"><div class="a" style="left:3px;top:5px;width:0;height:0;border-left:5px solid transparent;border-right:5px solid transparent;border-top:5px solid #000"></div></div>
 <!-- status bar -->
 <div class="a" style="left:1440px;top:572px;width:768px;height:22px;background:#ECE9D8"></div>
 <div class="a" style="left:1440px;top:572px;width:768px;height:1px;background:#fff"></div>
 <div class="a" style="left:1440px;top:575px;width:95px;height:18px;border-style:solid;border-width:1px;border-color:#ACA899 #fff #fff #ACA899"></div>
 <div class="a" style="left:1544px;top:575px;width:71px;height:18px;border-style:solid;border-width:1px;border-color:#ACA899 #fff #fff #ACA899"></div>
 <div class="a" style="left:1624px;top:575px;width:50px;height:18px;border-style:solid;border-width:1px;border-color:#ACA899 #fff #fff #ACA899"></div>
 <div class="a" style="left:1683px;top:575px;width:361px;height:18px;border-style:solid;border-width:1px;border-color:#ACA899 #fff #fff #ACA899"></div>
 <div class="a" style="left:1472px;top:577px;color:#000;font:bold 13.5px/15px 'Liberation Sans';white-space:pre">6/3/2009</div>
 <div class="a" style="left:1551px;top:577px;color:#000;font:bold 13.5px/15px 'Liberation Sans';white-space:pre">4:22 PM</div>
 <div class="a" style="left:1686px;top:577px;color:#000;font:bold 13.5px/15px 'Liberation Sans';white-space:pre">Log File:c:\tmp\image_server.log</div>
</div>

<!-- ===== MIDDLE IAS (ACTIVE) ===== -->
<div id="w2">
 <div class="a" style="left:769px;top:339px;width:745px;height:597px;border-radius:7px 7px 0 0;background:#0048E0;border:1px solid #001EA0;border-top:none"></div>
 <div class="a" style="left:770px;top:369px;width:3px;height:566px;background:linear-gradient(to right,#0040D8,#0058F0,#0048E0)"></div>
 <div class="a" style="left:1510px;top:369px;width:3px;height:566px;background:linear-gradient(to right,#0048E0,#0040D0,#0030B0)"></div>
 <div class="a" style="left:770px;top:932px;width:743px;height:3px;background:linear-gradient(to bottom,#0048E0,#0038C8,#0028A0)"></div>
 <div class="tb-act" style="left:769px;top:339px;width:745px"></div>
 <div class="cam" style="left:775px;top:347px"></div>
 <div class="ttl ttl-act" style="left:795px;top:349px;letter-spacing:-0.3px">Image Analysis Server</div>
 <div class="ttl ttl-act" style="left:953px;top:349px">AXIS SERVER IP: 164.54.212.241</div>
 <div class="bbtn-act" style="left:1441px;top:345px"><div class="a" style="left:5px;top:12px;width:7px;height:3px;background:#fff"></div></div>
 <div class="bbtn-act" style="left:1464px;top:345px"><div class="a" style="left:4px;top:4px;width:11px;height:11px;border:1px solid #fff;border-top-width:3px"></div></div>
 <div class="xbtn-act" style="left:1487px;top:345px"><svg width="19" height="19" class="a" style="left:0;top:0"><path d="M5 5L14 14M14 5L5 14" stroke="#fff" stroke-width="2.2"/></svg></div>
 <div class="a" style="left:773px;top:369px;width:737px;height:563px;background:#fff"></div>
 <div class="a" style="left:781px;top:377px;width:722px;height:546px;background:#ECE9D8;border-style:solid;border-width:1px 0 0 1px;border-color:#ACA899"><div class="a" style="left:0;top:0;right:0;bottom:0;border-style:solid;border-width:1px 0 0 1px;border-color:#716F64"></div></div>
 <svg class="a" style="left:794px;top:390px" width="696" height="520" viewBox="794 390 696 520">
  <defs>
   <radialGradient id="g2" cx="1172" cy="677" r="110" gradientUnits="userSpaceOnUse" gradientTransform="translate(1172 677) scale(1 0.27) translate(-1172 -677)">
    <stop offset="0" stop-color="#fff"/><stop offset="0.42" stop-color="#fbfaff"/><stop offset="0.56" stop-color="#b0a8ff"/><stop offset="0.74" stop-color="#6a5ae0"/><stop offset="0.88" stop-color="#3a3280"/><stop offset="1" stop-color="#262624" stop-opacity="0"/>
   </radialGradient>
   <radialGradient id="g2b" cx="1172" cy="677" r="100" gradientUnits="userSpaceOnUse" gradientTransform="translate(1172 677) scale(1 0.65) translate(-1172 -677)">
    <stop offset="0" stop-color="#3c3670"/><stop offset="0.5" stop-color="#2e2a48"/><stop offset="1" stop-color="#262624" stop-opacity="0"/>
   </radialGradient>
  </defs>
  <rect x="794" y="390" width="696" height="520" fill="#262624"/>
  <ellipse cx="1172" cy="677" rx="100" ry="65" fill="url(#g2b)"/>
  <ellipse cx="1172" cy="677" rx="112" ry="30" fill="url(#g2)"/>
  <rect x="794" y="390" width="696" height="17" fill="#000"/>
 </svg>
 <div class="a" style="left:795px;top:391.5px;color:#fff;font:bold 14px/17px 'Liberation Sans';letter-spacing:1.55px;white-space:pre">Wed Jun 03 21:33:44 2009</div>
</div>

<!-- ===== TASKBAR ===== -->
<div id="task">
 <div class="a" style="left:0;top:994px;width:2356px;height:30px;background:linear-gradient(to bottom,#2C64D8 0px,#3D86F0 1px,#3A7CEC 3px,#2A62DC 6px,#245EDC 9px,#245CDA 26px,#1E50C8 30px)"></div>
 <div class="tbb" style="left:7px"><div class="a" style="left:9px;top:4px;width:16px;height:16px;background:#3a0808;border:1px solid #f0a030"><div class="a" style="left:1px;top:0px;font:bold 10px/14px 'Liberation Sans';color:#ffe080;letter-spacing:-0.5px">Ex</div></div><span style="left:29px;letter-spacing:-1px">EXECUTOR</span><span style="left:96px;letter-spacing:-0.6px">CURRE...</span></div>
 <div class="tbb" style="left:167px"><svg class="a" style="left:9px;top:3px" width="16" height="17"><path d="M3 5l2 11h6l2-11z" fill="#d0d0d0" stroke="#808080" stroke-width="0.8"/><path d="M5 14L4 2M7 14l1-13M9 14l3-11M11 14l2-9" stroke-width="1.6" stroke="#f00"/><path d="M7 14l1-13" stroke="#ff0" stroke-width="1.6"/><path d="M9 14l3-11" stroke="#0c0" stroke-width="1.6"/></svg><span style="left:29px">untitled - Paint</span></div>
 <div class="tbb" style="left:327px"><div class="cam" style="left:9px;top:4px"></div><span style="left:29px;letter-spacing:-0.15px">Image Anlaysis Server</span></div>
 <div class="tbb tbb-act" style="left:487px"><div class="cam" style="left:9px;top:5px"></div><span style="left:29px;top:5px">Image Analysis Serve...</span></div>
 <div class="tbb" style="left:647px"><div class="cam" style="left:9px;top:4px"></div><span style="left:29px">Image Analysis Serve...</span></div>
 <svg class="a" style="left:2274px;top:1000px" width="82" height="20">
  <path d="M4 16l7-10" stroke="#a0a0a0" stroke-width="3"/><circle cx="12" cy="5" r="3" fill="#c0c0c0" stroke="#404040" stroke-width="0.6"/><path d="M3 15q-1 4 3 3" fill="none" stroke="#000" stroke-width="1"/>
  <rect x="22" y="2" width="14" height="11" fill="#fff" stroke="#000" stroke-width="0.8"/><rect x="22" y="2" width="14" height="2" fill="#0000c0"/><path d="M25 7h5M25 9h4M25 11h3" stroke="#808080"/><path d="M29 14l5-6" stroke="#808080" stroke-width="2"/>
  <rect x="44" y="3" width="12" height="12" fill="#ffff80" stroke="#000" stroke-width="0.8"/><text x="46.5" y="13" font-family="Liberation Sans" font-weight="bold" font-size="11" fill="#000080">?</text>
  <rect x="67" y="3" width="7" height="4" fill="none" stroke="#fff" stroke-width="1"/><rect x="64" y="6" width="7" height="4" fill="#245EDC" stroke="#fff" stroke-width="1"/><path d="M66 14h6l-3 3z" fill="#fff"/>
 </svg>
</div>

</body></html>
